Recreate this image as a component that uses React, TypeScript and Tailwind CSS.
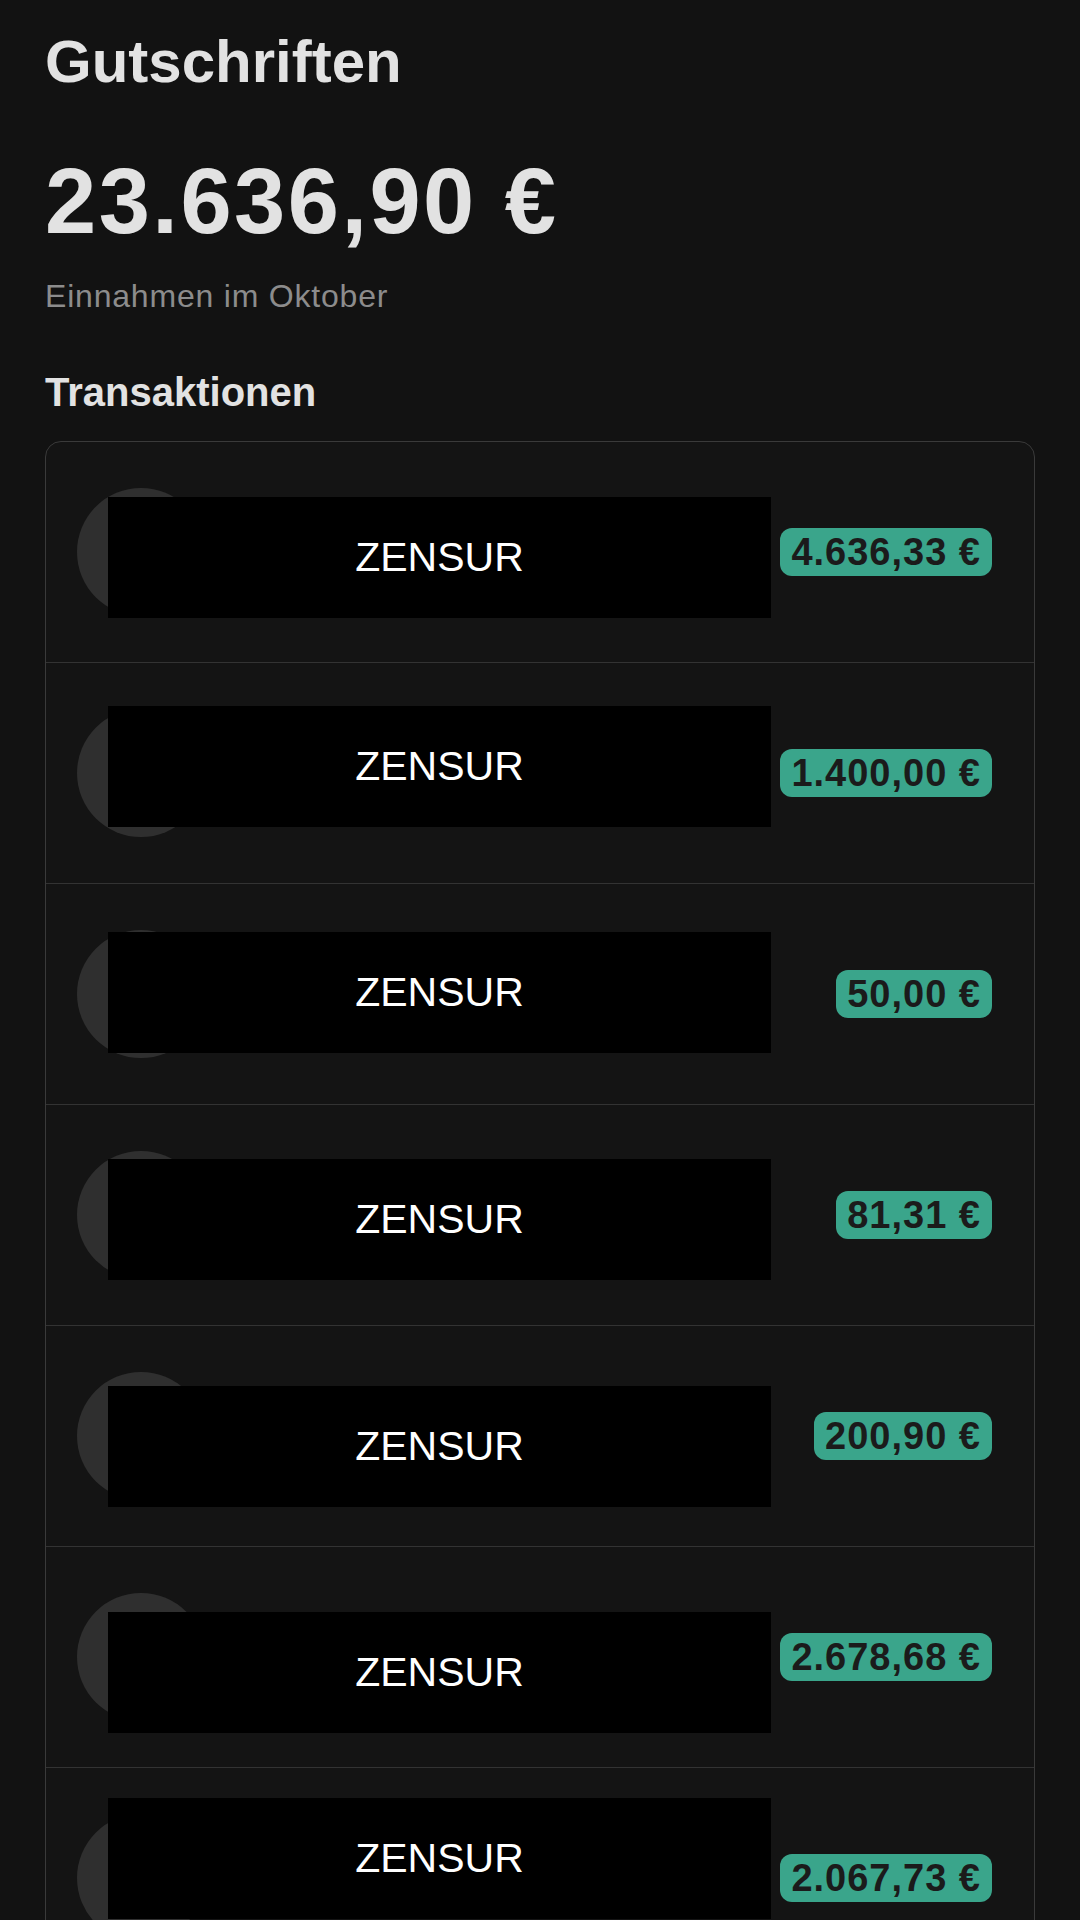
import React from 'react'

interface Tx {
  amount: string
  coverTop: string
}

// redaction boxes sit at slightly different heights in each row
const txs: Tx[] = [
  { amount: '4.636,33 €', coverTop: 'top-[55px]' },
  { amount: '1.400,00 €', coverTop: 'top-[43px]' },
  { amount: '50,00 €', coverTop: 'top-[48px]' },
  { amount: '81,31 €', coverTop: 'top-[54px]' },
  { amount: '200,90 €', coverTop: 'top-[60px]' },
  { amount: '2.678,68 €', coverTop: 'top-[65px]' },
  { amount: '2.067,73 €', coverTop: 'top-[30px]' },
]

export default function App() {
  return (
    <div className="h-[1920px] w-[1080px] overflow-hidden bg-[#121212] font-['Liberation_Sans',Arial,sans-serif] text-[#e2e2e2]">
      <div className="px-[45px] pt-[32px]">
        <h1 className="text-[60px] font-bold leading-none">Gutschriften</h1>

        <div className="mt-[63px] text-[92px] font-bold leading-none tracking-[2.5px]">
          23.636,90 €
        </div>
        <div className="mt-[33px] text-[32px] leading-none tracking-[0.8px] text-[#8c8c8c]">
          Einnahmen im Oktober
        </div>

        <h2 className="mt-[60px] text-[40px] font-bold leading-none">Transaktionen</h2>

        <div className="mt-[29px] w-[990px] overflow-hidden rounded-[16px] border border-[#3a3a3a] bg-[#141414]">
          {txs.map((t, i) => (
            <TxRow key={i} tx={t} />
          ))}
        </div>
      </div>
    </div>
  )
}

function TxRow({ tx }: { tx: Tx }) {
  return (
    <div className="relative flex h-[221px] items-center justify-between border-b border-[#333333] pl-[31px] pr-[42px]">
      <div className="h-[128px] w-[128px] shrink-0 rounded-full bg-[#2f2f2f]" />
      <div className="flex h-[48px] items-center rounded-[12px] bg-[#3aa58b] px-[11px] text-[38px] font-bold leading-none tracking-[1px] text-[#1b1b1b]">
        {tx.amount}
      </div>
      <div
        className={`absolute left-[62px] flex h-[121px] w-[663px] items-center justify-center bg-black text-[41px] leading-none text-white ${tx.coverTop}`}
      >
        ZENSUR
      </div>
    </div>
  )
}
